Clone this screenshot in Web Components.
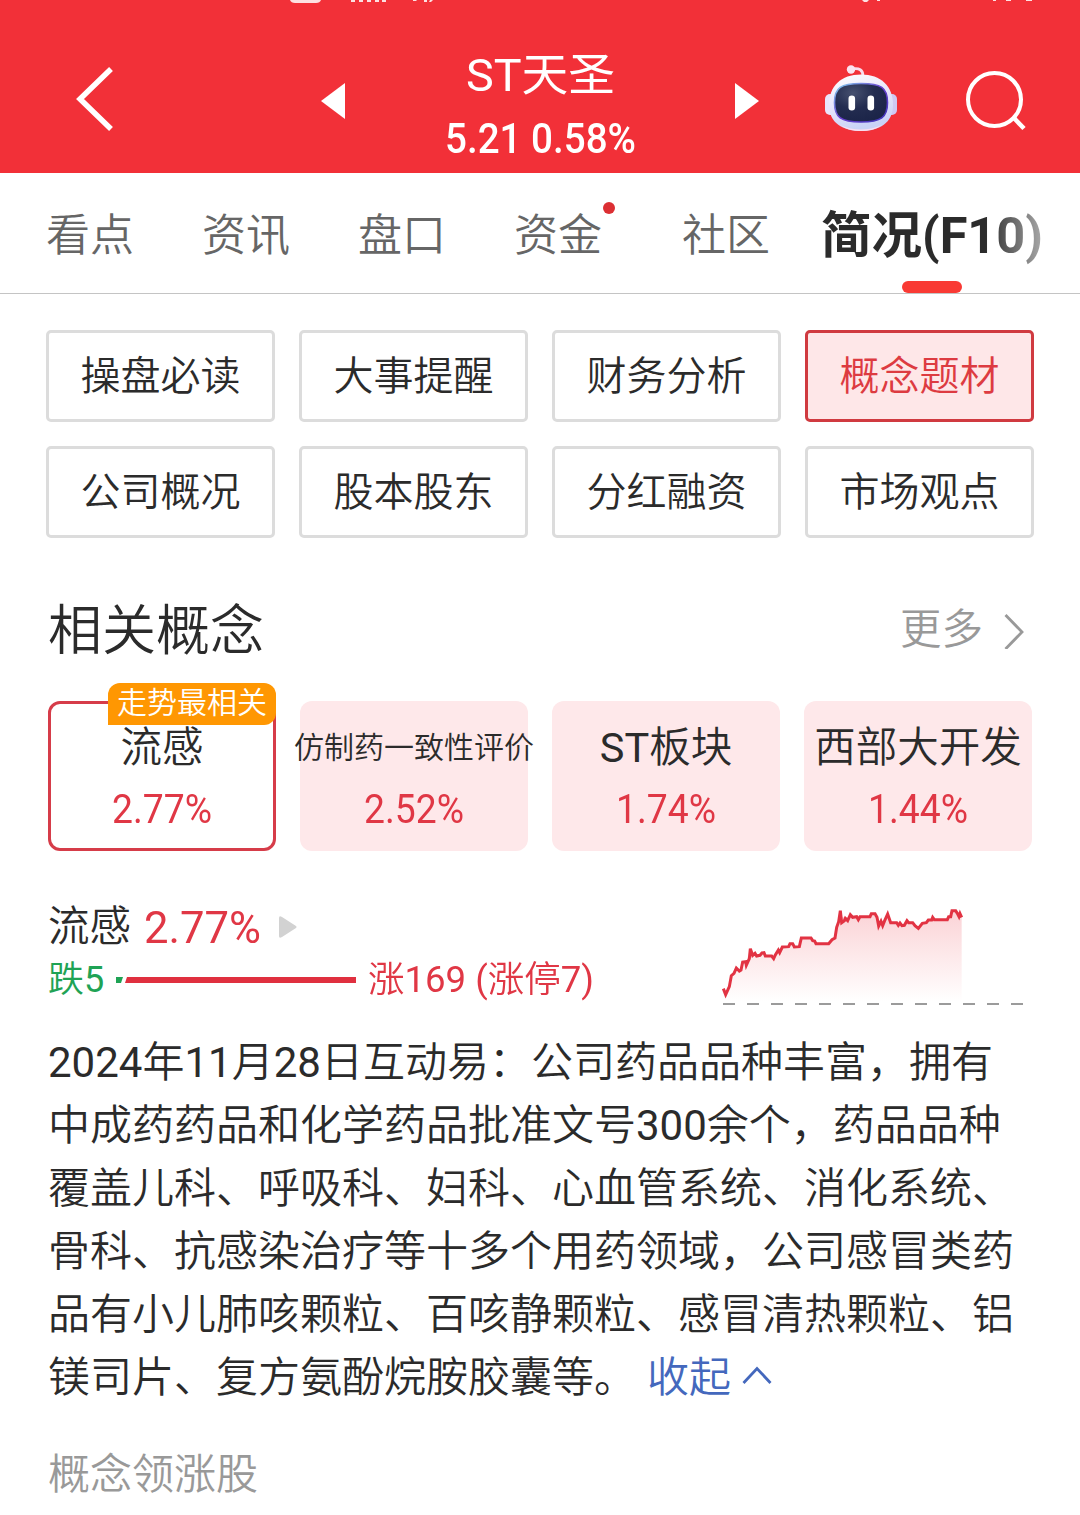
<!DOCTYPE html>
<html lang="zh-CN">
<head>
<meta charset="UTF-8">
<title>ST天圣</title>
<style>
    body {
        margin: 0;
        width: 1080px;
        height: 1515px;
        overflow: hidden;
        background: #fff;
        color: #2b2b2b;
        font-family: Roboto, "Noto Sans CJK SC", sans-serif;
        font-weight: 350;
    }
</style>
</head>
<body>
<stock-page></stock-page>

<script>
// Single line of text squeezed or stretched to a given width
class FitText extends HTMLElement {
    connectedCallback() {
        if (!this.shadowRoot) this.attachShadow({ mode: 'open' });
        this.shadowRoot.innerHTML = `
        <style>
            :host { display: block; white-space: nowrap; }
            span { display: inline-block; transform-origin: 0 50%; }
        </style>
        <span><slot></slot></span>`;
        const span = this.shadowRoot.querySelector('span');
        const w = Number(this.getAttribute('w'));
        const natural = span.getBoundingClientRect().width;
        this.style.width = w + 'px';
        if (natural) span.style.transform = `scaleX(${w / natural})`;
    }
}
customElements.define('fit-text', FitText);

class StockHeader extends HTMLElement {
    constructor() {
        super();
        this.attachShadow({ mode: 'open' });
        this.shadowRoot.innerHTML = `
        <style>
            :host { display: block; height: 173px; background: #f23038; color: #fff; }
            svg { display: block; }
            .status { height: 8px; }
            .bar {
                display: grid;
                grid-template-columns: 76px 245px 414px 90px 141px 1fr;
                height: 165px;
            }
            .back { padding-top: 58px; }
            .prev, .next { padding-top: 75px; }
            .middle { display: flex; }
            .names {
                display: flex;
                flex-direction: column;
                align-items: center;
                width: 390px;
                padding-top: 37px;
            }
            .name { font-size: 45px; line-height: 62px; height: 62px; font-weight: 400; }
            .quote { font-size: 42px; line-height: 64px; font-weight: 500; }
            .robot { padding-top: 55px; }
            .search { padding-top: 60px; }
        </style>
        <svg class="status" width="1080" height="8" viewBox="0 0 1080 8" fill="#fff" opacity=".85">
            <path d="M290 0h31q-1 3-5 3h-21q-4 0-5-3z"/>
            <path d="M351 0h4v2h-4zM359 0h4v2h-4zM367 0h4v2h-4zM375 0h4v2h-4zM382 0h4v2h-4zM413 0h4l-1 1h-3zM424 0h3v2h-3zM430 0h3l-2 2h-2z"/>
            <path d="M862 0h7l-2 2h-3zM877 0h3v1h-3zM993 0h3v1h-3zM1006 0h5v1h-5zM1026 0h6v1h-6z"/>
        </svg>
        <div class="bar">
            <span></span>
            <svg class="back" width="40" height="66" viewBox="0 0 40 66" fill="none" stroke="#fff" stroke-width="5.500">
                <path d="M35 3 4 33 35 63"/>
            </svg>
            <div class="middle">
                <svg class="prev" width="24" height="36" viewBox="0 0 24 36" fill="#fff"><path d="M0 18 24 0v36z"/></svg>
                <div class="names">
                    <fit-text class="name" w="149">${this.getAttribute('name')}</fit-text>
                    <fit-text class="quote" w="191">${this.getAttribute('quote')}</fit-text>
                </div>
            </div>
            <svg class="next" width="24" height="36" viewBox="0 0 24 36" fill="#fff"><path d="M24 18 0 0v36z"/></svg>
            <svg class="robot" width="72" height="70" viewBox="0 0 72 70">
                <defs>
                    <linearGradient id="shell" x1="0" y1="0" x2=".3" y2="1">
                        <stop offset="0" stop-color="#fff"/>
                        <stop offset=".6" stop-color="#e4e2fa"/>
                        <stop offset="1" stop-color="#c9d3f7"/>
                    </linearGradient>
                    <linearGradient id="rim" x1="0" y1="0" x2="1" y2="1">
                        <stop offset="0" stop-color="#83d2ee"/>
                        <stop offset=".5" stop-color="#6a3fd0"/>
                        <stop offset="1" stop-color="#3c36b8"/>
                    </linearGradient>
                    <radialGradient id="glass" cx=".35" cy=".25" r=".8">
                        <stop offset="0" stop-color="#46506f"/>
                        <stop offset=".5" stop-color="#232c50"/>
                        <stop offset="1" stop-color="#1b2448"/>
                    </radialGradient>
                </defs>
                <path d="M27 6q11-2 11 7" fill="none" stroke="#fadcec" stroke-width="2.800"/>
                <circle cx="26" cy="6.500" r="4.200" fill="#fbe3f0"/>
                <rect x="0" y="31" width="12" height="21" rx="5" fill="#e9e4fb"/>
                <rect x="60" y="31" width="12" height="21" rx="5" fill="#cfc8f3"/>
                <path d="M36 11.500C56 11.500 68 23 68 42 68 60 54 68 36 68S4 60 4 42C4 23 16 11.500 36 11.500z" fill="url(#shell)"/>
                <path d="M15 62q21 9 42 0-8 6-21 6t-21-6z" fill="#fbdff0"/>
                <path d="M36 20.500c20 0 26.500 4 26.500 19S56 59 36 59 9.500 54.500 9.500 39.500s6.500-19 26.500-19z" fill="url(#glass)" stroke="url(#rim)" stroke-width="1.600"/>
                <rect x="23.500" y="32.500" width="6.600" height="15" rx="3.300" fill="#fff"/>
                <rect x="42.500" y="32.500" width="6.600" height="15" rx="3.300" fill="#fff"/>
            </svg>
            <svg class="search" width="64" height="64" viewBox="0 0 64 64" fill="none" stroke="#fff" stroke-width="4">
                <circle cx="28.500" cy="31.500" r="26.500"/>
                <path d="m47 49 11 11.500" stroke-width="4.500"/>
            </svg>
        </div>`;
    }
}
customElements.define('stock-header', StockHeader);

class NavTab extends HTMLElement {
    constructor() {
        super();
        this.attachShadow({ mode: 'open' });
        this.shadowRoot.innerHTML = `
        <style>
            :host {
                display: block;
                position: relative;
                height: 120px;
                line-height: 127px;
                font-size: 44px;
                color: #666;
                white-space: nowrap;
            }
            :host([active]) {
                font-size: 50.5px;
                line-height: 125px;
                font-weight: 700;
            }
            :host([active]) .label {
                background: linear-gradient(90deg, #2b2b2b 74%, #aaa 100%);
                -webkit-background-clip: text;
                background-clip: text;
                color: transparent;
            }
            .mark { display: none; position: absolute; }
            :host([active]) .line {
                display: block;
                left: 81px;
                bottom: 0;
                width: 60px;
                height: 12px;
                border-radius: 6px;
                background: #f93a34;
            }
            :host([dot]) .dot {
                display: block;
                right: -13px;
                top: 29px;
                width: 12px;
                height: 12px;
                border-radius: 50%;
                background: #dc2f33;
            }
        </style>
        <span class="label"><slot></slot></span>
        <i class="mark line"></i><i class="mark dot"></i>`;
    }
}
customElements.define('nav-tab', NavTab);

class MenuButton extends HTMLElement {
    constructor() {
        super();
        this.attachShadow({ mode: 'open' });
        this.shadowRoot.innerHTML = `
        <style>
            :host {
                display: block;
                box-sizing: border-box;
                height: 92px;
                border: 3px solid #dcdcdc;
                border-radius: 5px;
                font-size: 40px;
                line-height: 87px;
                text-align: center;
            }
            :host([active]) {
                background: #fee7e8;
                border-color: #d03a40;
                color: #dd3b41;
            }
        </style>
        <slot></slot>`;
    }
}
customElements.define('menu-button', MenuButton);

class ConceptCard extends HTMLElement {
    constructor() {
        super();
        this.attachShadow({ mode: 'open' });
        const badge = this.getAttribute('badge');
        const rate = this.getAttribute('rate');
        this.shadowRoot.innerHTML = `
        <style>
            :host {
                display: flex;
                flex-direction: column;
                align-items: center;
                box-sizing: border-box;
                position: relative;
                height: 150px;
                padding-top: 16px;
                border-radius: 12px;
                background: #fee8ea;
            }
            :host([selected]) {
                padding-top: 13px;
                border: 3px solid #d63c49;
                background: #fff;
            }
            .name { font-size: 41.5px; line-height: 62px; height: 62px; white-space: nowrap; }
            :host([long]) .name { font-size: 30px; }
            .rate { font-size: 40px; line-height: 61px; color: #e03745; font-weight: 400; }
            .badge {
                position: absolute;
                right: -3px;
                top: -21px;
                width: 168px;
                height: 42px;
                border-radius: 12px 12px 12px 0;
                background: #ff9702;
                color: #fff;
                font-size: 30px;
                line-height: 39px;
                text-align: center;
            }
        </style>
        <div class="name"><slot></slot></div>
        <fit-text class="rate" w="100">${rate}</fit-text>
        ${badge ? `<div class="badge">${badge}</div>` : ''}`;
    }
}
customElements.define('concept-card', ConceptCard);

class TrendSummary extends HTMLElement {
    constructor() {
        super();
        this.attachShadow({ mode: 'open' });
        this.shadowRoot.innerHTML = `
        <style>
            :host { display: flex; justify-content: space-between; height: 110px; }
            svg { display: block; }
            b { font-weight: 400; }
            .row { display: flex; align-items: center; }
            .top { height: 54px; font-size: 41.5px; line-height: 54px; }
            .rate { margin: 1px 18px 0 13px; font-size: 44px; font-weight: 400; color: #e03745; }
            .count { height: 52px; font-size: 36px; line-height: 52px; color: #e03745; }
            .down { color: #1fa355; width: 67px; }
            .bar { margin-right: 12px; }
        </style>
        <div>
            <div class="row top">
                <span>流感</span>
                <fit-text class="rate" w="117">2.77%</fit-text>
                <svg width="18" height="22" viewBox="0 0 18 22" fill="#d2d2d2"><path d="M0 2q0-3 3-1l14 9q1 1 0 2L3 21q-3 2-3-1z"/></svg>
            </div>
            <div class="row count">
                <span class="down">跌<b>5</b></span>
                <svg class="bar" width="241" height="6" viewBox="0 0 241 6">
                    <path d="M1 0h7L6 6H1z" fill="#1fa355"/>
                    <path d="M12 0h229v6H10z" fill="#e0303f"/>
                </svg>
                <fit-text w="226">涨<b>169 (</b>涨停<b>7)</b></fit-text>
            </div>
        </div>
        <svg width="312" height="110" viewBox="60 30 936 330">
            <defs>
                <linearGradient id="area" x1="0" y1="0" x2="0" y2="1">
                    <stop offset="0" stop-color="#fbd3d6"/>
                    <stop offset="1" stop-color="#fff"/>
                </linearGradient>
            </defs>
            <path d="M70 296 77 314 88 290 95 256 109 234 120 241 128 216 138 220 148 182 158 196 188 192 196 198 220 200 236 186 247 171 266 169 274 161 282 170 298 170 304 144 333 144 348 161 386 161 405 144 420 80 450 82 510 80 516 71 528 80 540 105 563 80 572 98 606 105 620 98 640 101 655 115 680 92 742 89 756 62 768 62 785 80V336H70z" fill="url(#area)"/>
            <path d="M70 296 77 314 88 290 94 257 102 250 109 234 118 243 123 240 128 216 137 215 139 226 148 206 151 176 158 196 165 190 170 198 180 196 186 189 192 188 196 198 215 198 221 206 226 195 235 180 239 188 247 171 266 170 270 161 278 161 283 171 298 170 304 144 333 144 338 152 344 153 348 161 386 161 396 149 405 144 410 112 416 95 421 62 425 98 433 92 436 85 443 92 451 74 458 82 470 80 475 89 480 80 510 80 514 71 525 71 531 82 536 108 543 94 548 107 554 92 563 72 572 98 590 98 595 106 600 99 606 107 613 106 621 92 626 98 638 98 645 107 655 115 667 100 679 98 685 90 695 90 698 82 703 89 742 89 746 80 752 80 756 62 767 62 772 70 777 80 780 71 785 82" fill="none" stroke="#e23343" stroke-width="9"/>
            <path d="M69 342h904" stroke="#9b9b9b" stroke-width="6" stroke-dasharray="36 36"/>
        </svg>`;
    }
}
customElements.define('trend-summary', TrendSummary);

class StockPage extends HTMLElement {
    connectedCallback() {
        this.attachShadow({ mode: 'open' });
        this.shadowRoot.innerHTML = `
        <style>
            :host { display: block; }
            svg { display: block; }
            /* latin runs are a step heavier than the Chinese text */
            b { font-weight: 400; }
            nav {
                display: flex;
                height: 120px;
                padding-left: 46px;
                border-bottom: 1px solid #c4c4c4;
                gap: 68px;
            }
            nav .social { margin-left: 12px; }
            nav .profile { margin-left: -17px; }
            .menu {
                display: grid;
                grid-template-columns: repeat(4, 229px);
                gap: 24px;
                padding: 36px 46px 0;
            }
            .heading {
                display: flex;
                justify-content: space-between;
                align-items: center;
                height: 80px;
                margin: 53px 56px 0 48px;
            }
            h2 { margin: 0; padding-top: 2px; font-size: 54px; line-height: 80px; font-weight: inherit; }
            .more { display: flex; align-items: center; gap: 21px; font-size: 41.5px; line-height: 50px; color: #999; }
            .more span { margin-top: -3px; }
            .cards {
                display: grid;
                grid-template-columns: repeat(4, 228px);
                gap: 24px;
                padding: 30px 48px 0;
            }
            trend-summary { margin: 49px 48px 0; }
            .text { margin: 21px 0 0 48px; font-size: 42px; line-height: 63px; white-space: nowrap; }
            .last { display: flex; align-items: center; }
            .fold { display: flex; align-items: center; gap: 11px; margin-left: 11px; color: #4468bd; }
            .fold svg { margin-top: -5px; }
            .leaders { margin: 33px 0 0 48px; font-size: 42px; line-height: 66px; color: #999; }
        </style>
        <stock-header name="ST天圣" quote="5.21 0.58%"></stock-header>
        <nav>
            <nav-tab>看点</nav-tab>
            <nav-tab>资讯</nav-tab>
            <nav-tab>盘口</nav-tab>
            <nav-tab dot>资金</nav-tab>
            <nav-tab class="social">社区</nav-tab>
            <nav-tab class="profile" active>简况(F10)</nav-tab>
        </nav>
        <div class="menu">
            <menu-button>操盘必读</menu-button>
            <menu-button>大事提醒</menu-button>
            <menu-button>财务分析</menu-button>
            <menu-button active>概念题材</menu-button>
            <menu-button>公司概况</menu-button>
            <menu-button>股本股东</menu-button>
            <menu-button>分红融资</menu-button>
            <menu-button>市场观点</menu-button>
        </div>
        <div class="heading">
            <h2>相关概念</h2>
            <div class="more">
                <span>更多</span>
                <svg width="20" height="36" viewBox="0 0 20 36" fill="none" stroke="#999" stroke-width="2.800"><path d="M1.500 2 18 19 1.500 36"/></svg>
            </div>
        </div>
        <div class="cards">
            <concept-card selected badge="走势最相关" rate="2.77%">流感</concept-card>
            <concept-card long rate="2.52%">仿制药一致性评价</concept-card>
            <concept-card rate="1.74%"><b>ST</b>板块</concept-card>
            <concept-card rate="1.44%">西部大开发</concept-card>
        </div>
        <trend-summary></trend-summary>
        <div class="text">
            <div><b>2024</b>年<b>11</b>月<b>28</b>日互动易：公司药品品种丰富，拥有</div>
            <div>中成药药品和化学药品批准文号<b>300</b>余个，药品品种</div>
            <div>覆盖儿科、呼吸科、妇科、心血管系统、消化系统、</div>
            <div>骨科、抗感染治疗等十多个用药领域，公司感冒类药</div>
            <div>品有小儿肺咳颗粒、百咳静颗粒、感冒清热颗粒、铝</div>
            <div class="last">
                <span>镁司片、复方氨酚烷胺胶囊等。</span>
                <span class="fold">收起
                    <svg width="30" height="20" viewBox="0 0 30 20" fill="none" stroke="#4468bd" stroke-width="2.800"><path d="M1.500 18 15 3.500 28.500 18"/></svg>
                </span>
            </div>
        </div>
        <div class="leaders">概念领涨股</div>`;
    }
}
customElements.define('stock-page', StockPage);
</script>
</body>
</html>
